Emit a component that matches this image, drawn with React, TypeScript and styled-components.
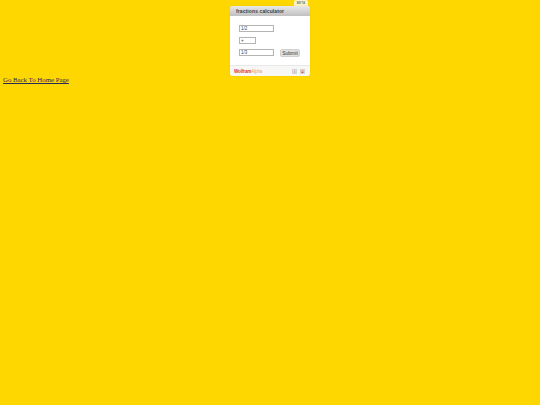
import React from 'react';
import styled, { createGlobalStyle } from 'styled-components';

const GlobalStyle = createGlobalStyle`
  html, body {
    margin: 0;
    padding: 0;
    background: #ffd700;
  }
  body {
    min-height: 405px;
    font-family: "Liberation Serif", serif;
  }
`;

const Page = styled.div`
  display: flex;
  flex-direction: column;
  align-items: flex-start;
  padding: 0 0 0 3px;
`;

const WidgetSlot = styled.div`
  align-self: center;
  margin-left: -3px;
  width: 80px;
  display: flex;
  flex-direction: column;
`;

const BetaTab = styled.div`
  align-self: flex-end;
  margin-right: 2px;
  width: 14px;
  height: 6px;
  background: #fdf3c4;
  border-radius: 2px 2px 0 0;
  font: bold 3px/6px "Liberation Sans", sans-serif;
  letter-spacing: 0.2px;
  color: #777;
  text-align: center;
`;

const Widget = styled.div`
  height: 70px;
  display: flex;
  flex-direction: column;
  background: #fff;
  border-radius: 3px;
  overflow: hidden;
  box-shadow: 0 0 1px rgba(120, 100, 0, 0.4);
`;

const Header = styled.div`
  height: 10px;
  flex: none;
  padding-left: 6px;
  background: linear-gradient(#e8e8e8, #c0c0c0);
  font: bold 5px/10px "Liberation Sans", sans-serif;
  letter-spacing: 0.1px;
  color: #3c3c3c;
`;

const Form = styled.div`
  flex: 1;
  display: flex;
  flex-direction: column;
  gap: 4.5px;
  padding: 8.5px 10px 0 9px;
`;

const Row = styled.div`
  display: flex;
  align-items: center;
  justify-content: space-between;
  height: 7.5px;
`;

const Field = styled.div<{ $w: number }>`
  box-sizing: border-box;
  width: ${(p) => p.$w}px;
  height: 7px;
  padding-left: 1px;
  background: #fff;
  border: 0.75px solid #b4b4b4;
  font: 4.5px/5.5px "Liberation Sans", sans-serif;
  color: #444;
`;

const Submit = styled.div`
  width: 20px;
  height: 8px;
  margin-top: 0.5px;
  background: #e2e2e2;
  border: 0.5px solid #d0d0d0;
  box-sizing: border-box;
  border-radius: 2px;
  font: 5px/7px "Liberation Sans", sans-serif;
  color: #333;
  text-align: center;
`;

const Footer = styled.div`
  height: 11px;
  flex: none;
  box-sizing: border-box;
  display: flex;
  align-items: center;
  justify-content: space-between;
  padding: 1px 5px 0 4px;
  background: #f7f7f5;
  border-top: 0.5px solid #e8e8e8;
`;

const Brand = styled.div`
  font: bold 4.6px/8px "Liberation Sans", sans-serif;
  letter-spacing: -0.15px;
  color: #d8382c;
`;

const BrandAlpha = styled.span`
  font-weight: normal;
  color: #f0a060;
`;

const FooterIcons = styled.div`
  display: flex;
  gap: 3px;
`;

const FooterIcon = styled.div<{ $bg: string; $fg: string }>`
  box-sizing: border-box;
  width: 5px;
  height: 5px;
  background: ${(p) => p.$bg};
  border: 0.5px solid #d4d4d4;
  font: bold 4px/4px "Liberation Sans", sans-serif;
  color: ${(p) => p.$fg};
  text-align: center;
`;

const BackLink = styled.a`
  font-size: 6.8px;
  line-height: 8px;
  color: #2a2a5a;
  text-decoration: underline;
`;

export default function App() {
  return (
    <>
      <GlobalStyle />
      <Page>
        <WidgetSlot>
          <BetaTab>BETA</BetaTab>
          <Widget>
            <Header>fractions calculator</Header>
            <Form>
              <Row>
                <Field $w={35}>1/2</Field>
              </Row>
              <Row>
                <Field $w={17}>+</Field>
              </Row>
              <Row>
                <Field $w={35}>1/3</Field>
                <Submit>Submit</Submit>
              </Row>
            </Form>
            <Footer>
              <Brand>
                Wolfram<BrandAlpha>Alpha</BrandAlpha>
              </Brand>
              <FooterIcons>
                <FooterIcon $bg="#e4e4e4" $fg="#888">i</FooterIcon>
                <FooterIcon $bg="#f3b8a8" $fg="#c0392b">+</FooterIcon>
              </FooterIcons>
            </Footer>
          </Widget>
        </WidgetSlot>
        <BackLink href="#">Go Back To Home Page</BackLink>
      </Page>
    </>
  );
}
